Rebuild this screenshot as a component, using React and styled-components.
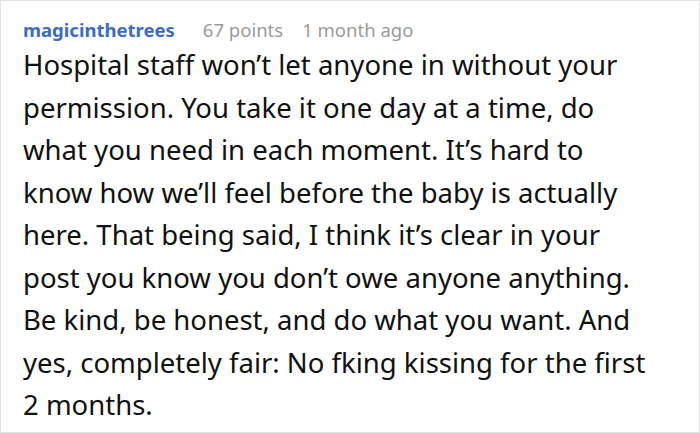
import React from "react";
import styled, { createGlobalStyle } from "styled-components";

const Global = createGlobalStyle`
    html, body {
        margin: 0;
        padding: 0;
        background: #ffffff;
    }
`;

const Card = styled.div`
    box-sizing: border-box;
    width: 700px;
    height: 433px;
    border: 1px solid #e2e2e2;
    background: #ffffff;
    padding: 15px 20px 0 22px;
    font-family: "Noto Sans", "Open Sans", sans-serif;
`;

const Meta = styled.div`
    display: flex;
    align-items: baseline;
    gap: 19px;
    font-size: 18.5px;
    line-height: 28px;
`;

const Author = styled.span`
    color: #3b6cc2;
    font-weight: 700;
    margin-right: 9px;
`;

const Info = styled.span`
    color: #9a9a9a;
`;

const Body = styled.p`
    margin: 0;
    color: #111111;
    font-size: 27.5px;
    line-height: 42.5px;
    white-space: nowrap;
`;

const lines = [
    "Hospital staff won’t let anyone in without your",
    "permission. You take it one day at a time, do",
    "what you need in each moment. It’s hard to",
    "know how we’ll feel before the baby is actually",
    "here. That being said, I think it’s clear in your",
    "post you know you don’t owe anyone anything.",
    "Be kind, be honest, and do what you want. And",
    "yes, completely fair: No fking kissing for the first",
    "2 months.",
];

export default function App() {
    return (
        <>
            <Global />
            <Card>
                <Meta>
                    <Author>magicinthetrees</Author>
                    <Info>67 points</Info>
                    <Info>1 month ago</Info>
                </Meta>
                <Body>
                    {lines.map((line, i) => (
                        <React.Fragment key={i}>
                            {line}
                            {i < lines.length - 1 && <br />}
                        </React.Fragment>
                    ))}
                </Body>
            </Card>
        </>
    );
}
